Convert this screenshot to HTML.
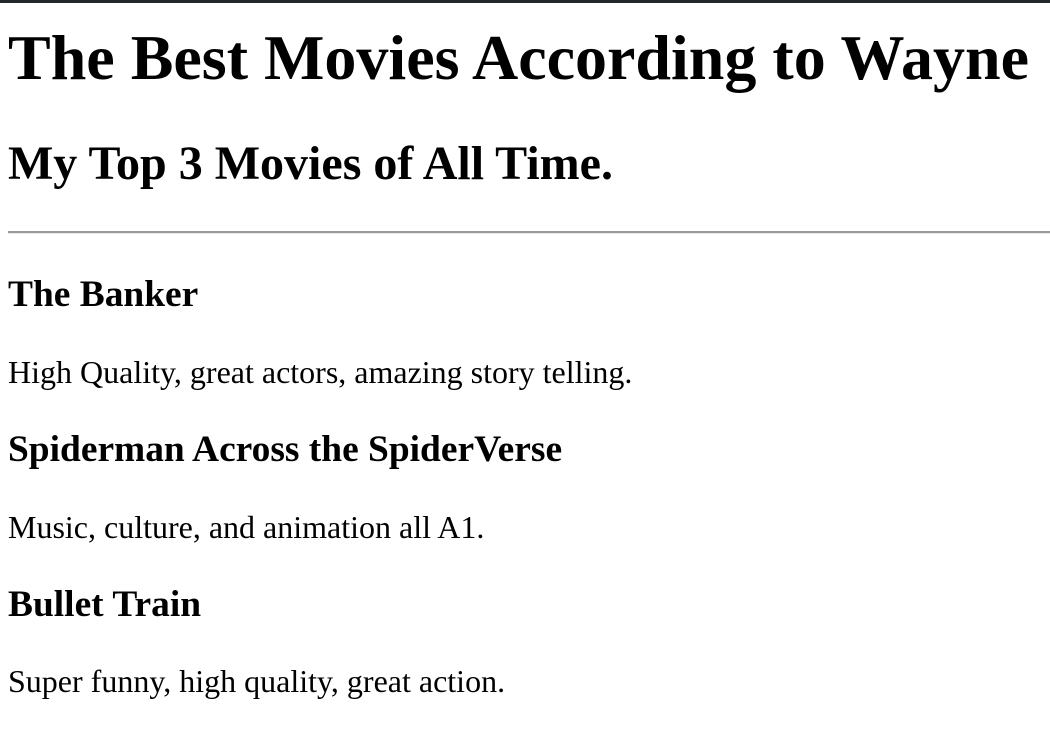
<!DOCTYPE html>
<html>
<head>
<meta charset="utf-8">
<style>
  html,body{margin:0;padding:0;background:#fff;}
  body{padding:0 8px;font-family:"Liberation Serif","Times New Roman",serif;color:#000;overflow:hidden;height:722px;}
  .bar{position:absolute;left:0;top:0;width:1050px;height:3px;background:#23272b;}
  h1{font-size:64px;margin:21px 0 41px;font-weight:bold;line-height:normal;}
  h2{font-size:48px;margin:39.8px 0;font-weight:bold;}
  h3{font-size:37.44px;margin:37.44px 0;font-weight:bold;}
  p{font-size:32px;margin:32px 0;}
  hr{margin:0 -8px 2px 0;border:none;border-top:2px solid #9a9a9a;border-bottom:1px solid #e8e8e8;height:0;}
  .sp{height:0;}
</style>
</head>
<body>
<div class="bar"></div>
<h1>The Best Movies According to Wayne</h1>
<h2>My Top 3 Movies of All Time.</h2>
<hr>
<div style="padding-top:2px">
<h3 style="margin-top:35.44px">The Banker</h3>
<p>High Quality, great actors, amazing story telling.</p>
<h3>Spiderman Across the SpiderVerse</h3>
<p>Music, culture, and animation all A1.</p>
<h3>Bullet Train</h3>
<p>Super funny, high quality, great action.</p>
</div>
</body>
</html>
